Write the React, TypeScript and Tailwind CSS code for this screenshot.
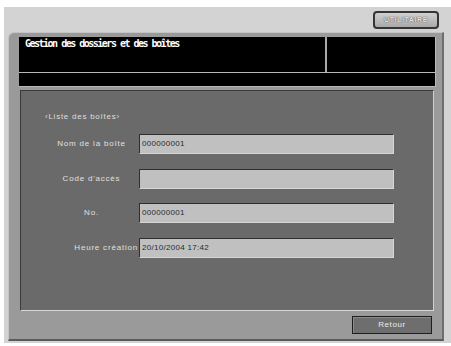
const rows = [
  { label: 'Nom de la boîte', value: '000000001', align: 'text-center' },
  { label: "Code d'accès", value: '', align: 'text-center' },
  { label: 'No.', value: '000000001', align: 'text-center' },
  { label: 'Heure création', value: '20/10/2004 17:42', align: 'text-right' },
];

export default function App() {
  return (
    <div className="w-[451px] h-[346px] bg-white pl-[4px] pt-[7px] pb-[3px] font-['Liberation_Sans',sans-serif]">
      <div className="h-full bg-[#d3d3d3] flex flex-col">
        {/* top bar */}
        <div className="h-[25px] flex justify-end items-start pt-[4px] pr-[12px]">
          <button className="w-[66px] h-[18px] rounded-[4px] border-2 border-[#353535] bg-gradient-to-b from-[#d0d0d0] to-[#a9a9a9] flex items-center justify-center text-[7px] font-bold tracking-[0.6px] text-[#e4e4e4] [text-shadow:0_0_1px_#555,0_0_1px_#555]">
            UTILITAIRE
          </button>
        </div>

        {/* main panel */}
        <div className="h-[309px] ml-[4px] mr-[7px] bg-[#9a9a9a] rounded-tl-[6px] border-t border-l border-[#c4c4c4] border-r-2 border-b-2 border-r-[#6e6e6e] border-b-[#5a5a5a] pl-[10px] pr-[6px] pt-[4px] flex flex-col">
          <div className="bg-black border-r border-[#b8b8b8]">
            <div className="h-[35px] flex">
              <div className="w-[306px] pl-[6px] pt-[1px] text-white font-['DejaVu_Sans_Mono',monospace] font-bold text-[10px] leading-[12px] tracking-[-1.5px]">
                Gestion des dossiers et des boîtes
              </div>
              <div className="w-[2px] bg-[#a8a8a8]" />
              <div className="flex-1" />
            </div>
            <div className="h-px bg-[#b8b8b8]" />
            <div className="h-[13px]" />
            <div className="h-px bg-[#b8b8b8]" />
          </div>

          {/* inner panel */}
          <div className="mt-[3px] ml-px mr-[2px] h-[221px] bg-[#6a6a6a] border-t border-l border-[#3a3a3a] border-r border-b border-r-[#d0d0d0] border-b-[#d8d8d8] pt-[20px] pl-[24px]">
            <div className="text-[8px] leading-[12px] tracking-[0.75px] text-[#dedede]">‹Liste des boîtes›</div>
            <div className="mt-[11px] flex flex-col gap-[14.5px]">
              {rows.map((r) => (
                <div key={r.label} className="flex items-center h-[20px]">
                  <div className={`w-[93px] ${r.align} text-[8px] tracking-[0.8px] text-[#e0e0e0] whitespace-nowrap`}>
                    {r.label}
                  </div>
                  <div className="ml-[1px] w-[255px] h-[20px] bg-[#c0c0c0] border-t border-l border-[#2e2e2e] border-r border-b border-r-[#d6d6d6] border-b-[#d6d6d6] pl-[2px] flex items-center text-[8px] tracking-[0.3px] text-[#2a2a2a]">
                    {r.value}
                  </div>
                </div>
              ))}
            </div>
          </div>

          {/* bottom button */}
          <div className="mt-[5px] flex justify-end pr-[4px]">
            <button className="w-[80px] h-[18px] bg-[#6e6e6e] border border-[#1e1e1e] shadow-[inset_1px_1px_0_#8a8a8a] text-[8px] tracking-[0.6px] text-[#ececec] flex items-center justify-center">
              Retour
            </button>
          </div>
        </div>
      </div>
    </div>
  );
}
